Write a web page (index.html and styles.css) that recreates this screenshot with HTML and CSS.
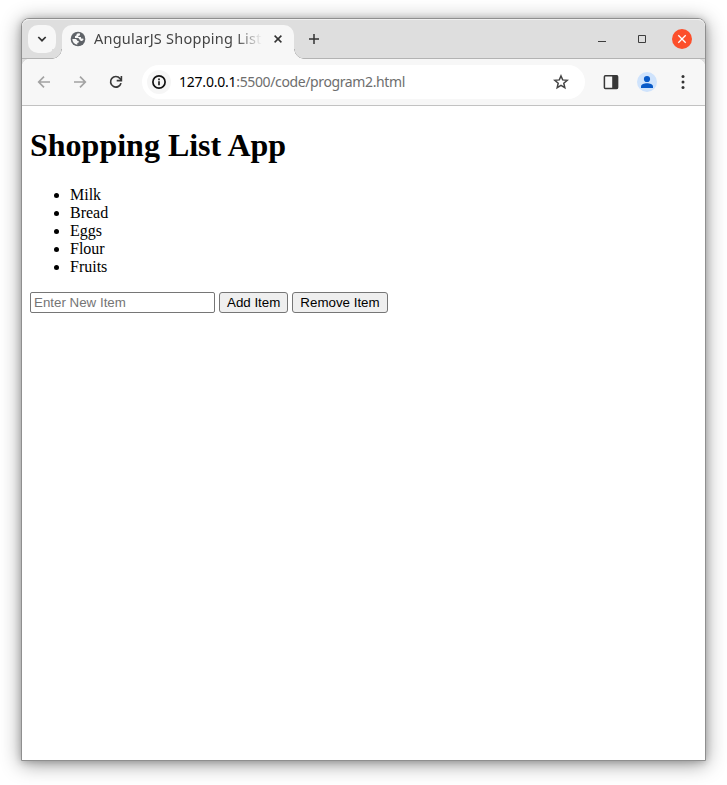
FILE: index.html
```html
<!DOCTYPE html>
<html lang="en">
<head>
<meta charset="utf-8">
<title>AngularJS Shopping List</title>
<link rel="stylesheet" href="styles.css">
</head>
<body>
<div class="window">
  <header class="tabstrip">
    <button class="tab-search" aria-label="Search tabs">
      <svg width="28" height="28" viewBox="0 0 28 28"><path d="M10.3 12l3.7 3.7 3.7-3.7" fill="none" stroke="#333" stroke-width="1.7"/></svg>
    </button>
    <div class="tab">
      <svg class="globe" width="16" height="16" viewBox="0 0 16 16"><circle cx="8" cy="8" r="7.3" fill="#5f6368"/><path d="M9.8 2.4C7.5 2.200 6.100 3 6.600 4.300L5 5.200v1.700h3.600l.8 1.500 1 .6v1.100h1.700l1.500-1.600-.5-.9-1.700.1-.6-1.700H8.200l.2-1.100 1.700-.7zM2.300 8h2.600c1.400 0 2.200.6 2.300 1.700l1.500.2v1.600l-1.400.4v1.800C4.200 13.300 2.300 11 2.300 8z" fill="#f7f7f7"/></svg>
      <span class="tab-title">AngularJS Shopping List</span>
      <svg class="tab-close" width="16" height="16" viewBox="0 0 16 16"><path d="M4.600 4.600l6.800 6.800M11.400 4.600l-6.800 6.800" stroke="#333" stroke-width="1.5"/></svg>
    </div>
    <svg class="new-tab" width="16" height="16" viewBox="0 0 16 16"><path d="M8 3v10M3 8h10" stroke="#333" stroke-width="1.5"/></svg>
    <div class="controls">
      <svg width="20" height="20" viewBox="0 0 20 20"><path d="M6 12.5h8" stroke="#3d3d3d"/></svg>
      <svg width="20" height="20" viewBox="0 0 20 20"><path d="M6.5 6.5h7v7h-7z" fill="none" stroke="#3d3d3d"/></svg>
      <svg width="20" height="20" viewBox="0 0 20 20"><circle cx="10" cy="10" r="10" fill="#fc4f2b"/><path d="M6.3 6.3l7.4 7.4M13.7 6.3l-7.4 7.4" stroke="#fff" stroke-width="1.3"/></svg>
    </div>
  </header>
  <nav class="toolbar">
    <svg width="16" height="16" viewBox="0 0 16 16"><path d="M14 8H3M8 2.7L2.7 8 8 13.3" fill="none" stroke="#a3a3a3" stroke-width="1.7"/></svg>
    <svg width="16" height="16" viewBox="0 0 16 16"><path d="M2 8h11M8 2.7L13.3 8 8 13.3" fill="none" stroke="#a3a3a3" stroke-width="1.7"/></svg>
    <svg width="16" height="16" viewBox="0 0 16 16"><path d="M13 9.1A5.3 5.3 0 1 1 12 4.5l1.3 1.6" fill="none" stroke="#3a3a3a" stroke-width="1.7"/><path d="M13.4 1.9v4.7H8.7" fill="none" stroke="#3a3a3a" stroke-width="1.6"/></svg>
    <div class="address">
      <span class="info"><svg width="16" height="16" viewBox="0 0 16 16"><circle cx="8" cy="8" r="6.1" fill="none" stroke="#111" stroke-width="1.7"/><path d="M8 7.2v4M8 4.6v1.600" stroke="#111" stroke-width="1.6"/></svg></span>
      <span class="url"><b>127.0.0.1</b><span>:5500/code/program2.html</span></span>
      <svg class="star" width="16" height="16" viewBox="0 0 16 16"><path d="M8 2l1.700 3.900 4.500.4-3.400 2.900 1 4.400L8 11.300l-3.800 2.300 1-4.400-3.400-2.900 4.500-.4z" fill="none" stroke="#444" stroke-width="1.5"/></svg>
    </div>
    <svg class="panel" width="16" height="16" viewBox="0 0 16 16"><rect x="1.4" y="1.800" width="13.200" height="12.600" rx="1" fill="none" stroke="#383838" stroke-width="1.5"/><path d="M9.200 1.800H15v12.600H9.200z" fill="#383838"/></svg>
    <svg class="profile" width="20" height="20" viewBox="0 0 20 20"><circle cx="10" cy="10" r="10" fill="#cfe3fc"/><circle cx="10" cy="7" r="3.100" fill="#0759c8"/><path d="M4 16v-1.500c0-2 3.400-3.200 6-3.200s6 1.200 6 3.200V16z" fill="#0759c8"/></svg>
    <svg class="menu" width="16" height="16" viewBox="0 0 16 16" fill="#333"><circle cx="8" cy="2.600" r="1.500"/><circle cx="8" cy="8" r="1.500"/><circle cx="8" cy="13.400" r="1.500"/></svg>
  </nav>
  <main class="page">
    <h1>Shopping List App</h1>
    <ul>
      <li>Milk</li>
      <li>Bread</li>
      <li>Eggs</li>
      <li>Flour</li>
      <li>Fruits</li>
    </ul>
    <div class="entry">
      <input type="text" placeholder="Enter New Item">
      <button>Add Item</button>
      <button>Remove Item</button>
    </div>
  </main>
</div>
</body>
</html>
```
FILE: styles.css
```css
* { box-sizing: border-box; }
html { height: 100%; background: #fff; overflow: hidden; }
body { margin: 0; height: 785px; padding: 18px 21px 24px; overflow: hidden; }
svg { display: block; flex: none; }

.window {
  width: 685px;
  height: 743px;
  display: flex;
  flex-direction: column;
  border: 1px solid #8f8f8f;
  border-radius: 8px 8px 0 0;
  background: #fff;
  box-shadow: 0 3px 20px rgba(0, 0, 0, .42), 0 1px 7px rgba(0, 0, 0, .2);
}

.tabstrip {
  height: 40px;
  flex: none;
  display: flex;
  align-items: flex-start;
  padding: 6px 13px 0 6px;
  background: #dedede;
  border-bottom: 1px solid #b3b3b3;
  border-radius: 7px 7px 0 0;
  box-shadow: inset 0 1px #f0f0f0;
}
.tab-search {
  width: 28px;
  height: 28px;
  padding: 0;
  border: 0;
  border-radius: 10px;
  background: #f7f7f7;
}
.tab {
  position: relative;
  width: 232px;
  height: 34px;
  margin-left: 6px;
  padding: 0 8px 6px;
  display: flex;
  align-items: center;
  border-radius: 10px 10px 0 0;
  background: #f7f7f7;
}
.tab::before, .tab::after {
  content: "";
  position: absolute;
  bottom: 0;
  width: 10px;
  height: 10px;
}
.tab::before { right: 100%; background: radial-gradient(circle at 0 0, #dedede 9px, #b3b3b3 9.5px, #f7f7f7 10px); }
.tab::after { left: 100%; background: radial-gradient(circle at 100% 0, #dedede 9px, #b3b3b3 9.5px, #f7f7f7 10px); }
.tab-title {
  width: 168px;
  height: 22px;
  margin-left: 8px;
  overflow: hidden;
  white-space: nowrap;
  font: 14.5px/20px "Noto Sans", sans-serif;
  letter-spacing: .24px;
  color: #444;
  -webkit-mask-image: linear-gradient(90deg, #000 142px, transparent 168px);
  mask-image: linear-gradient(90deg, #000 142px, transparent 168px);
}
.tab-close { margin-left: 8px; }
.new-tab { margin: 6px 0 0 12px; }
.controls { display: flex; gap: 20px; margin: 4px 0 0 auto; }

.toolbar {
  height: 47px;
  flex: none;
  display: flex;
  align-items: center;
  padding: 0 14px;
  border-bottom: 1px solid #c2c2c2;
  background: radial-gradient(circle at 8px 8px, #f7f7f7 8px, #dedede 8.5px) 0 0 / 8px 8px no-repeat,
    radial-gradient(circle at 0 8px, #f7f7f7 8px, #dedede 8.5px) 100% 0 / 8px 8px no-repeat, #f7f7f7;
}
.toolbar > svg + svg { margin-left: 20px; }
.address {
  width: 443px;
  height: 34px;
  margin-left: 18px;
  padding: 0 16px 0 5px;
  display: flex;
  align-items: center;
  border-radius: 17px;
  background: #fff;
}
.info { padding: 4px; border-radius: 50%; background: #f6f6f6; }
.url {
  margin-left: 8px;
  white-space: nowrap;
  font: 14px/20px "Noto Sans", sans-serif;
  letter-spacing: -.22px;
  color: #6e6e6e;
}
.url b { font-weight: 400; color: #000; }
.url span { letter-spacing: -.38px; }
.star { margin-left: auto; }
.panel { margin-left: 18px; }
.toolbar > .profile { margin-left: 18px; }
.toolbar > .menu { margin-left: 18px; }

.page { flex: 1; padding: 0 8px; font-family: "Liberation Serif", serif; font-size: 16px; color: #000; }
.page h1 { margin: 21px 0 22px; font-size: 32px; line-height: 37px; }
.page ul { margin: 0 0 16px; padding-left: 40px; line-height: 18px; }
.entry { display: flex; gap: 4px; }
.entry input, .entry button {
  height: 21px;
  margin: 0;
  border: 1px solid #767676;
  border-radius: 3px;
  font: 13.333px "Liberation Sans", sans-serif;
}
.entry input { width: 185px; padding: 1px 3px; border-radius: 2px; }
.entry input::placeholder { color: #757575; }
.entry button { padding: 0 7px; background: #efefef; color: #000; white-space: nowrap; }
```
